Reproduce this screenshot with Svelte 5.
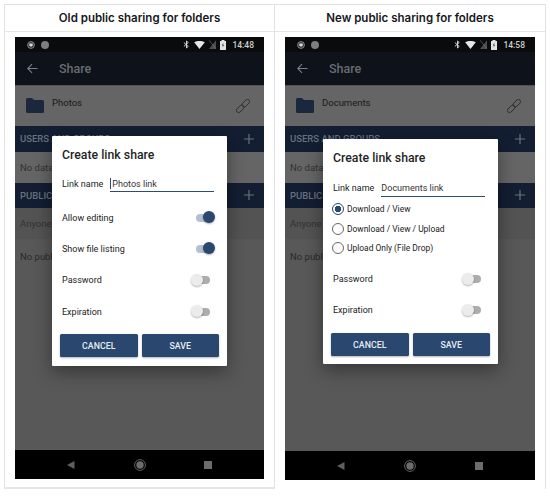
<script lang="ts">
  const panels = [
    { heading: 'Old public sharing for folders', time: '14:48', folder: 'Photos', link: 'Photos link', kind: 'old' },
    { heading: 'New public sharing for folders', time: '14:58', folder: 'Documents', link: 'Documents link', kind: 'new' }
  ];
  const modes = ['Download / View', 'Download / View / Upload', 'Upload Only (File Drop)'];
</script>

{#snippet toggle(on: boolean)}
  <span class="toggle" class:on><span class="knob"></span></span>
{/snippet}

{#snippet section(title: string, row: string)}
  <div class="section-bar">
    <span>{title}</span>
    <svg viewBox="0 0 10 10" width="10" height="10"><path d="M5 0v10M0 5h10" stroke="#6a707a" stroke-width="1.2" fill="none" /></svg>
  </div>
  <div class="row">{row}</div>
{/snippet}

<div class="table">
  {#each panels as p}
    <section class="cell {p.kind}">
      <h2>{p.heading}</h2>
      <div class="body">
        <div class="phone">
          <div class="status">
            <svg class="shield" viewBox="0 0 8 8" width="8" height="8"><circle cx="4" cy="4" r="3.4" fill="#2a2a2a" stroke="#8a8a8a" stroke-width="1" /><path d="M2.300 2.500h3.400v1.700L4 6 2.300 4.200z" fill="#dcdcdc" /></svg>
            <span class="dot"></span>
            <span class="spacer"></span>
            <svg viewBox="0 0 8 10" width="7" height="9"><path d="M1 2.800l5 4.400L4 9V1l2 1.800-5 4.400" stroke="#d8d8d8" stroke-width="1.100" fill="none" /></svg>
            <svg viewBox="0 0 12 9" width="11" height="8"><path d="M0 1.500C3.500-.5 8.500-.5 12 1.500L6 9z" fill="#e6e6e6" /></svg>
            <svg viewBox="0 0 8 10" width="7" height="9"><path d="M0 10L8 0v10z" fill="#4a4c50" /><path d="M0 0l8 10" stroke="#777" stroke-width=".7" /></svg>
            <svg viewBox="0 0 6 10" width="6" height="10"><path d="M1.500 0h3v1H6v9H0V1h1.500z" fill="#e2e2e2" /><path d="M3.400 2.500L2 5.500h1l-.4 2L4 4.700H3z" fill="#222" /></svg>
            <span class="time">{p.time}</span>
          </div>
          <div class="appbar">
            <svg viewBox="0 0 12 12" width="11" height="11"><path d="M11.500 6H1M5.500 1.200L.8 6l4.700 4.800" stroke="#7c7f84" stroke-width="1.200" fill="none" /></svg>
            <span>Share</span>
          </div>
          <div class="file">
            <svg class="folder" viewBox="0 0 18 15" width="18" height="15"><path d="M0 1.500Q0 0 1.500 0H6l2 2h8.500Q18 2 18 3.500v10q0 1.500-1.500 1.500h-15Q0 15 0 13.500z" fill="#1a273d" /></svg>
            <span class="folder-name">{p.folder}</span>
            <svg viewBox="0 0 14 14" width="14" height="14"><g transform="rotate(-45 7 7)" fill="none" stroke="#2c2c2c" stroke-width=".9"><rect x="-1.500" y="4.800" width="9" height="4.400" rx="2.200" /><rect x="6.500" y="4.800" width="9" height="4.400" rx="2.200" /></g></svg>
          </div>
          {@render section('USERS AND GROUPS', 'No data shared')}
          {@render section('PUBLIC LINKS', 'Anyone with the link')}
          <div class="empty">No public links</div>
          <div class="navbar">
            <svg viewBox="0 0 8 8" width="8" height="8"><path d="M7.500 0v8L0 4z" fill="#5f5f5f" /></svg>
            <svg viewBox="0 0 12 12" width="12" height="12"><circle cx="6" cy="6" r="5.400" fill="none" stroke="#6c6c6c" stroke-width=".9" /><circle cx="6" cy="6" r="3.700" fill="#6c6c6c" /></svg>
            <span class="square"></span>
          </div>

          <div class="dialog">
            <h3>Create link share</h3>
            <div class="name-row">
              <span>Link name</span>
              <span class="input">{p.link}</span>
            </div>
            {#if p.kind === 'old'}
              <div class="opt"><span>Allow editing</span>{@render toggle(true)}</div>
              <div class="opt"><span>Show file listing</span>{@render toggle(true)}</div>
            {:else}
              <div class="radios">
                {#each modes as m, i}
                  <div class="radio-row"><span class="radio" class:checked={i === 0}></span>{m}</div>
                {/each}
              </div>
            {/if}
            <div class="opt"><span>Password</span>{@render toggle(false)}</div>
            <div class="opt"><span>Expiration</span>{@render toggle(false)}</div>
            <div class="actions">
              <button>CANCEL</button>
              <button>SAVE</button>
            </div>
          </div>
        </div>
      </div>
    </section>
  {/each}
</div>

<style>
  :global(body) {
    background: #fff;
    font-family: Roboto, sans-serif;
  }
  .table {
    display: grid;
    grid-template-columns: 270px 271px;
    width: 541px;
    margin: 4px 0 0 4px;
    border-top: 1px solid #dfe1e3;
    border-right: 1px solid #dfe1e3;
    height: 484px;
  }
  .cell {
    border-left: 1px solid #dfe1e3;
  }
  .cell.old {
    border-bottom: 2px solid #e4e6e8;
  }
  h2 {
    margin: 0;
    height: 26px;
    border-bottom: 1px solid #e4e6e8;
    text-align: center;
    font: 600 11.500px/26px Inter, sans-serif;
    color: #16181c;
  }
  .body {
    padding: 5px 0 0 10px;
  }
  .phone {
    position: relative;
    width: 249px;
    height: 442px;
    background: #585858;
    display: flex;
    flex-direction: column;
    overflow: hidden;
  }
  .new .phone {
    width: 250px;
    height: 443px;
  }
  .status {
    height: 15px;
    background: #0a0b0d;
    display: flex;
    align-items: center;
    gap: 4px;
    padding: 0 10px 0 12px;
    box-sizing: border-box;
  }
  .shield {
    margin-right: 2px;
  }
  .dot {
    width: 8px;
    height: 8px;
    border-radius: 50%;
    background: #7e7e7e;
  }
  .spacer {
    flex: 1;
  }
  .time {
    font-size: 8.500px;
    font-weight: 500;
    color: #d0d0d0;
    margin-left: 2px;
  }
  .appbar {
    height: 33px;
    background: #0e121a;
    display: flex;
    align-items: center;
    gap: 21px;
    padding-left: 12px;
    color: #696c71;
    font-size: 12.500px;
    font-weight: 500;
  }
  .file {
    height: 41px;
    background: #656565;
    border-top: 1px solid #525252;
    box-sizing: border-box;
    display: flex;
    align-items: center;
    padding: 0 14px 0 11px;
    color: #181818;
    font-size: 9.500px;
  }
  .folder {
    margin-top: -1px;
  }
  .folder-name {
    margin: -8px 0 0 8px;
    flex: 1;
  }
  .section-bar {
    height: 25.500px;
    background: #131e32;
    display: flex;
    align-items: center;
    justify-content: space-between;
    padding: 0 10px 0 5px;
    color: #69717f;
    font-size: 9.500px;
    font-weight: 500;
  }
  .row {
    height: 31px;
    background: #656565;
    display: flex;
    align-items: center;
    padding-left: 5px;
    color: #323232;
    font-size: 9.500px;
    white-space: nowrap;
  }
  .section-bar:nth-of-type(n + 6) + .row {
    background: #535353;
  }
  .empty {
    flex: 1;
    padding: 12px 5px;
    color: #2a2a2a;
    font-size: 9.500px;
  }
  .navbar {
    height: 29px;
    background: #000;
    display: flex;
    align-items: center;
    justify-content: space-between;
    padding: 0 52px;
  }
  .square {
    width: 8px;
    height: 8px;
    background: #6c6c6c;
  }
  .dialog {
    position: absolute;
    left: 37px;
    top: 99px;
    width: 175px;
    box-sizing: border-box;
    padding: 0 8px 9px;
    background: #fff;
    border-radius: 1px;
    box-shadow: 0 6px 18px rgba(0, 0, 0, 0.4);
    color: #222;
  }
  .new .dialog {
    left: 38px;
    top: 102px;
    padding-bottom: 8px;
  }
  h3 {
    margin: 0;
    padding: 11px 2px 0;
    height: 17px;
    font-size: 12.300px;
    font-weight: 500;
    line-height: 17px;
    color: #1f1f1f;
  }
  .name-row {
    display: flex;
    align-items: flex-start;
    padding-left: 2px;
    margin-top: 13px;
    gap: 7px;
    font-size: 9px;
    line-height: 14px;
  }
  .new .name-row {
    margin-top: 14px;
  }
  .input {
    flex: 1;
    height: 14px;
    margin-right: 5px;
    border-bottom: 1px solid #2e4a75;
    color: #333;
  }
  .old .input {
    border-bottom-width: 1.500px;
  }
  .old .input::before {
    content: '';
    display: inline-block;
    width: 1px;
    height: 11px;
    margin-right: 1px;
    vertical-align: -2px;
    background: #2e4a75;
  }
  .new .input {
    height: 15px;
  }
  .opt {
    display: flex;
    align-items: center;
    justify-content: space-between;
    height: 31.300px;
    padding: 0 4px 0 2px;
    font-size: 9px;
  }
  .name-row + .opt {
    margin-top: 10px;
  }
  .toggle {
    position: relative;
    width: 17px;
    height: 8px;
    margin-right: 5px;
    border-radius: 4px;
    background: #adadad;
  }
  .knob {
    position: absolute;
    top: -2.500px;
    left: -2px;
    width: 12px;
    height: 12px;
    border-radius: 50%;
    background: #ececec;
    box-shadow: 0 1px 2px rgba(0, 0, 0, 0.3);
  }
  .toggle.on {
    margin-right: 2px;
    background: #b4c0d0;
  }
  .toggle.on .knob {
    left: 7px;
    background: #29476f;
  }
  .radios {
    margin: 2px 0 5.400px;
    padding-left: 1px;
  }
  .radio-row {
    display: flex;
    align-items: center;
    gap: 3px;
    height: 19.700px;
    font-size: 8.450px;
    white-space: nowrap;
  }
  .radio {
    width: 12px;
    height: 12px;
    box-sizing: border-box;
    border-radius: 50%;
    border: 1px solid #666;
    background: #fff;
  }
  .radio.checked {
    border-color: #29476f;
    background: radial-gradient(circle, #29476f 0 3px, #fff 3.500px);
  }
  .actions {
    display: flex;
    justify-content: space-between;
    margin-top: 7px;
  }
  button {
    width: 77.500px;
    height: 23px;
    padding: 0;
    border: none;
    border-radius: 1.500px;
    background: #29476f;
    box-shadow: 0 1px 2px rgba(0, 0, 0, 0.3);
    color: #e8ecf2;
    font: 500 8.800px Roboto, sans-serif;
  }
</style>
